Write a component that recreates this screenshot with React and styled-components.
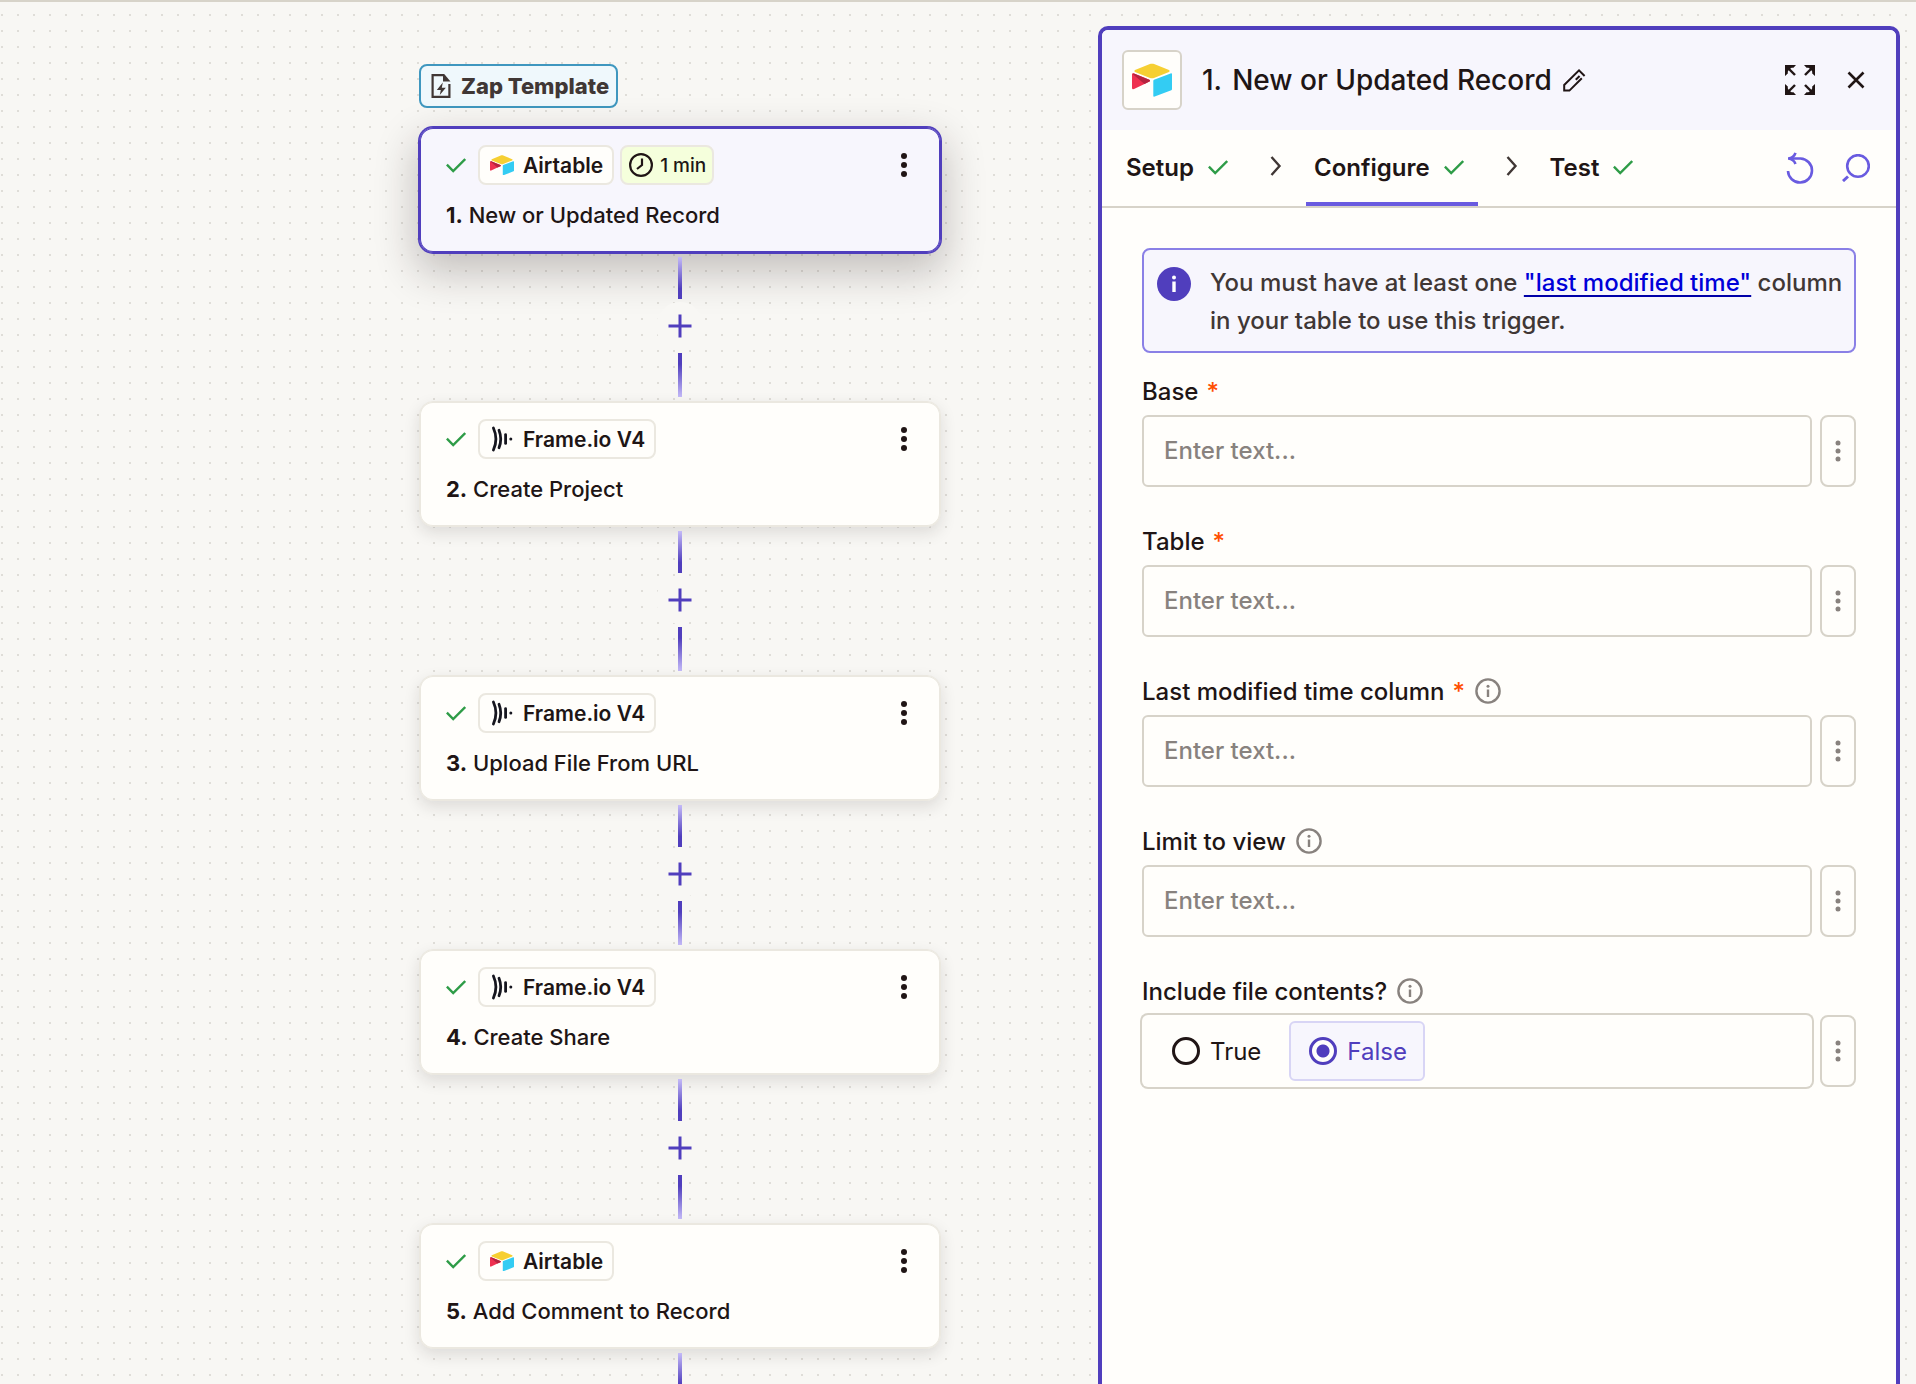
import React from "react";
import styled, { createGlobalStyle } from "styled-components";

const c = {
  ink: "#201515",
  text: "#403735",
  muted: "#88827e",
  line: "#d7d3c9",
  soft: "#ebe8e0",
  paper: "#fffefb",
  canvas: "#f8f7f4",
  lilac: "#f7f6fd",
  purple: "#503ebd",
  violet: "#695be0",
  green: "#2e9c47",
};

const GlobalStyle = createGlobalStyle`
  *, *::before, *::after { box-sizing: border-box; }
  body { margin: 0; background: ${c.canvas}; }
  body, button, input { font-family: Inter, "Liberation Sans", sans-serif; }
  button { background: none; border: 0; padding: 0; margin: 0; color: inherit; cursor: pointer; }
  svg { display: block; flex: none; }
`;

const Editor = styled.div`
  display: flex;
  height: 100vh;
  overflow: hidden;
  border-top: 2px solid ${c.line};
  color: ${c.ink};
  background: radial-gradient(circle at 2px 2px, #dfddd8 1px, transparent 1px) 0 11px / 16px 16px ${c.canvas};
`;

const Canvas = styled.main`
  flex: 1;
  min-width: 0;
  padding: 62px 0 0 262px;
  display: flex;
  justify-content: center;
`;

const Flow = styled.div`
  width: 522px;
  display: flex;
  flex-direction: column;
`;

const TemplateTag = styled.div`
  flex: none;
  align-self: flex-start;
  display: flex;
  align-items: center;
  gap: 10px;
  height: 44px;
  margin-bottom: 19px;
  padding: 0 7px 0 10px;
  border: 2px solid #3f97bf;
  border-radius: 8px;
  background: #eff8fc;
  color: ${c.text};
  font-size: 22px;
  font-weight: 800;
`;

const Card = styled.article`
  flex: none;
  padding: 17px 20px 23px 26px;
  border: 1px solid ${(p) => (p.$selected ? c.purple : c.soft)};
  border-radius: 14px;
  background: ${(p) => (p.$selected ? c.lilac : c.paper)};
  box-shadow: ${(p) =>
    p.$selected
      ? `inset 0 0 0 1px ${c.purple}, 0 0 0 1px ${c.purple}, 0 16px 40px 4px rgba(32, 21, 21, 0.24)`
      : `inset 0 0 0 1px ${c.soft}, 0 6px 16px rgba(32, 21, 21, 0.12)`};
`;

const CardTop = styled.div`
  display: flex;
  align-items: center;
  gap: 6px;
`;

const CheckSlot = styled.span`
  padding-right: 6px;
`;

const Pill = styled.span`
  display: flex;
  align-items: center;
  gap: ${(p) => (p.$time ? 7 : 9)}px;
  height: 40px;
  padding: 0 ${(p) => (p.$time ? 6 : 9)}px 0 ${(p) => (p.$time ? 7 : 10)}px;
  border: 2px solid ${c.soft};
  border-radius: 8px;
  background: ${(p) => (p.$time ? "#f5ffdc" : c.paper)};
  font-size: ${(p) => (p.$time ? 19 : 21)}px;
  font-weight: ${(p) => (p.$time ? 500 : 600)};
`;

const CardMenu = styled.button`
  display: grid;
  place-items: center;
  width: 32px;
  height: 40px;
  margin-left: auto;
`;

const CardTitle = styled.h2`
  margin: 16px 0 0;
  font-size: 22px;
  line-height: 28px;
  font-weight: 500;
`;

const Connector = styled.div`
  flex: none;
  display: flex;
  flex-direction: column;
  align-items: center;
  gap: 3px;
  padding: 4px 0;
`;

const Stem = styled.span`
  width: 4px;
  height: ${(p) => (p.$down ? 44 : 42)}px;
  background: linear-gradient(${(p) => (p.$down ? "to top" : "to bottom")}, #c4baf8, ${c.purple} 75%);
`;

const AddStep = styled.button`
  display: grid;
  place-items: center;
  width: 48px;
  height: 48px;
  border-radius: 50%;
  background: ${c.canvas};
  color: ${c.purple};
`;

const Panel = styled.aside`
  flex: none;
  width: 802px;
  margin: 24px 16px 0 0;
  border: 4px solid ${c.purple};
  border-bottom: 0;
  border-radius: 10px 10px 0 0;
  background: ${c.paper};
  overflow: hidden;
`;

const PanelHeader = styled.header`
  display: flex;
  align-items: center;
  gap: 20px;
  height: 100px;
  padding: 0 20px;
  background: ${c.lilac};
`;

const AppBadge = styled.span`
  display: grid;
  place-items: center;
  width: 60px;
  height: 60px;
  border: 2px solid ${c.line};
  border-radius: 6px;
  background: ${c.paper};
`;

const PanelTitle = styled.h1`
  display: flex;
  align-items: center;
  gap: 10px;
  margin: 0;
  font-size: 28px;
  line-height: 36px;
  font-weight: 500;
`;

const Actions = styled.div`
  display: flex;
  align-items: center;
  gap: 16px;
  margin-left: auto;
`;

const IconButton = styled.button`
  display: grid;
  place-items: center;
  width: 40px;
  height: 40px;
`;

const TabBar = styled.nav`
  display: flex;
  align-items: center;
  height: 78px;
  padding: 0 20px 0 16px;
  border-bottom: 2px solid ${c.line};
`;

const Tab = styled.button`
  display: flex;
  align-items: center;
  gap: 14px;
  align-self: stretch;
  padding: 2px 14px 0 8px;
  border-bottom: 4px solid ${(p) => (p.$active ? c.violet : "transparent")};
  font-size: 24px;
  font-weight: 600;
`;

const Crumb = styled.span`
  width: 64px;
  padding: 0 0 4px 4px;
  display: grid;
  place-items: center;
  color: ${c.text};
`;

const TabActions = styled(Actions)`
  color: ${c.violet};
`;

const Form = styled.form`
  padding: 40px;
`;

const Notice = styled.div`
  display: flex;
  gap: 19px;
  padding: 14px 8px 11px 12px;
  border: 2px solid #8a80e6;
  border-radius: 8px;
  background: ${c.lilac};
  color: ${c.text};
  font-size: 24px;
  line-height: 38px;
  font-weight: 500;
  margin-bottom: 20px;
`;

const NoticeText = styled.p`
  margin: 0;
`;

const NoticeLink = styled.a`
  color: #0000d8;
  text-decoration: underline #0000a8 2px;
  text-underline-offset: 4px;
`;

const Field = styled.div`
  display: flex;
  flex-direction: column;
  gap: 6px;
  margin-bottom: 36px;
`;

const LabelRow = styled.div`
  display: flex;
  align-items: center;
  gap: 10px;
  height: 36px;
  font-size: 24px;
  font-weight: 500;
  color: ${c.ink};
`;

const Star = styled.span`
  margin-left: 8px;
  color: #ff4f00;
`;

const HintButton = styled.button`
  color: ${c.muted};
`;

const Controls = styled.div`
  display: flex;
  gap: 8px;
`;

const TextInput = styled.input`
  flex: 1;
  min-width: 0;
  height: 72px;
  padding: 0 20px 2px;
  border: 2px solid ${c.line};
  border-radius: 6px;
  background: ${c.paper};
  color: ${c.ink};
  font-size: 24px;
  font-weight: 500;
  outline: none;
  &::placeholder { color: ${c.muted}; opacity: 1; }
`;

const FieldMenu = styled.button`
  display: grid;
  place-items: center;
  width: 36px;
  height: 72px;
  border: 2px solid ${c.line};
  border-radius: 8px;
  color: ${c.muted};
`;

const RadioGroup = styled.div`
  flex: 1;
  display: flex;
  align-items: center;
  gap: 10px;
  height: 72px;
  padding: 0 10px;
  border-radius: 6px;
  box-shadow: 0 0 0 2px ${c.line};
`;

const RadioOption = styled.label`
  display: flex;
  align-items: center;
  gap: 10px;
  height: 60px;
  padding: 0 16px 0 18px;
  border: 2px solid ${(p) => (p.$on ? "#d8d5f5" : "transparent")};
  border-radius: 6px;
  background: ${(p) => (p.$on ? c.lilac : "transparent")};
  color: ${(p) => (p.$on ? c.purple : c.ink)};
  font-size: 24px;
`;

const Radio = styled.input`
  appearance: none;
  width: 28px;
  height: 28px;
  margin: 0;
  border: 3px solid currentColor;
  border-radius: 50%;
  background: ${c.paper};
  color: inherit;
  &:checked { background: radial-gradient(circle, currentColor 6px, ${c.paper} 7px); }
`;

const Check = () => (
  <svg width="20" height="20" viewBox="0 0 20 20" fill="none" stroke={c.green} strokeWidth="2.4">
    <path d="M.9 9.6 7.2 16 19.2 4" />
  </svg>
);

const AirtableLogo = ({ width = 24 }) => (
  <svg width={width} height={(width * 34) / 40} viewBox="0 0 40 34">
    <path fill="#f6cf32" d="M17.9 1 3 7.1c-.8.4-.8 1.5 0 1.900l15 5.900c1.300.5 2.700.5 4 0l15-5.900c.8-.4.8-1.500 0-1.900L22.100 1c-1.300-.5-2.900-.5-4.200 0z" />
    <path fill="#33ccf3" d="M21.300 17.800v14.900c0 .7.700 1.200 1.400.9l16.600-6.400c.4-.2.700-.5.700-.9V11.300c0-.7-.7-1.200-1.400-.9L22 16.800c-.4.200-.7.600-.7 1z" />
    <path fill="#ee3050" d="M17.400 18.600 12.500 21 2 26c-.9.400-2-.2-2-1.100V11.500c0-1 1-1.400 2-1l15.300 6.200c1 .4 1 1.500.1 1.900z" />
    <path fill="#b5233f" d="m17.400 18.600-4.900 2.400L.6 10.900c.4-.4.900-.6 1.400-.4l15.300 6.200c1 .4 1 1.500.1 1.900z" />
  </svg>
);

const FrameLogo = () => (
  <svg width="24" height="26" viewBox="0 0 24 26" fill="none" stroke="#16161f" strokeLinecap="round">
    <path strokeWidth="2.800" d="M3.400 2c3.200 7 3.200 15 0 22" />
    <path strokeWidth="2.800" d="M9 4.200c2.200 5.600 2.200 12 0 17.600" />
    <path strokeWidth="2.800" d="M15.600 8.600v8.800" />
    <circle cx="20.800" cy="13" r="1.500" fill="#16161f" stroke="none" />
  </svg>
);

const Clock = () => (
  <svg width="24" height="24" viewBox="0 0 24 24" fill="none" stroke={c.ink} strokeWidth="2.200">
    <circle cx="12" cy="12" r="10.900" />
    <path d="M13 5.500v6.500l-5 4" />
  </svg>
);

const Dots = ({ r = 3, step = 9 }) => (
  <svg width="8" height="28" viewBox="0 0 8 28" fill="currentColor">
    <circle cx="4" cy={14 - step} r={r} />
    <circle cx="4" cy="14" r={r} />
    <circle cx="4" cy={14 + step} r={r} />
  </svg>
);

const TemplateIcon = () => (
  <svg width="20" height="26" viewBox="0 0 20 26">
    <path fill="none" stroke={c.text} strokeWidth="2.200" d="M12.500 2.100H1.600v21.800h16.800V11" />
    <path fill={c.text} d="M12 1h1.200L19.500 8.500H12z" />
    <path fill={c.text} d="M11.800 9.500 5.800 17h4l-1 5 6-7.300h-4z" />
  </svg>
);

const Plus = () => (
  <svg width="24" height="24" viewBox="0 0 24 24" fill="none" stroke="currentColor" strokeWidth="3">
    <path d="M12 .5v23M.5 12h23" />
  </svg>
);

const Pencil = () => (
  <svg width="24" height="24" viewBox="0 0 24 24" fill="none" stroke={c.ink} strokeWidth="2">
    <path d="M22.600 8 17 2.400 2.200 17v5.600h5.200L19.800 10.200" />
    <path d="M13.800 11.800 17.600 8" />
  </svg>
);

const Expand = () => (
  <svg width="30" height="30" viewBox="0 0 30 30">
    {[0, 90, 180, 270].map((a) => (
      <g key={a} transform={`rotate(${a} 15 15)`}>
        <path fill={c.ink} d="M0 0h11L8.500 2.800H2.800v5.700L0 11z" />
        <path fill={c.ink} d="M1 1h7L1 8z" />
        <path stroke={c.ink} strokeWidth="2.400" d="m2 2 8 8" />
      </g>
    ))}
  </svg>
);

const Close = () => (
  <svg width="18" height="18" viewBox="0 0 18 18" fill="none" stroke={c.ink} strokeWidth="2.600">
    <path d="m1.500 1.500 15 15m0-15-15 15" />
  </svg>
);

const Chevron = () => (
  <svg width="12" height="20" viewBox="0 0 12 20" fill="none" stroke="currentColor" strokeWidth="2.400">
    <path d="m1.500 1 8 9-8 9" />
  </svg>
);

const Undo = () => (
  <svg width="28" height="32" viewBox="0 0 28 32" fill="none" stroke="currentColor" strokeWidth="2.600">
    <path d="M3 6.500h11.500a12 12 0 1 1-12.500 12.500" />
    <path d="M9.500.8C8.500 4 6 6 2.200 6.500 6 7 8.500 9 9.500 12" />
  </svg>
);

const Search = () => (
  <svg width="28" height="28" viewBox="0 0 28 28" fill="none" stroke="currentColor" strokeWidth="2.600">
    <circle cx="16" cy="12" r="10.800" />
    <path strokeWidth="3" d="m1 27 5-4.500" />
  </svg>
);

const Info = () => (
  <svg width="26" height="26" viewBox="0 0 26 26" fill="none" stroke="currentColor" strokeWidth="2.400">
    <circle cx="13" cy="13" r="11.600" />
    <path d="M13 11.500v7.500" />
    <circle cx="13" cy="8.200" r="1.500" fill="currentColor" stroke="none" />
  </svg>
);

const InfoSolid = () => (
  <svg width="35" height="38" viewBox="0 0 35 38">
    <circle cx="18" cy="20" r="17" fill={c.purple} />
    <circle cx="18" cy="13.500" r="2" fill="#fff" />
    <path stroke="#fff" strokeWidth="3.400" d="M18 17.500V28" />
  </svg>
);

const steps = [
  { app: "Airtable", title: "New or Updated Record", selected: true, time: "1 min" },
  { app: "Frame.io V4", title: "Create Project" },
  { app: "Frame.io V4", title: "Upload File From URL" },
  { app: "Frame.io V4", title: "Create Share" },
  { app: "Airtable", title: "Add Comment to Record" },
];

const fields = [
  { id: "base", label: "Base", required: true },
  { id: "table", label: "Table", required: true },
  { id: "modified", label: "Last modified time column", required: true, hint: true },
  { id: "view", label: "Limit to view", hint: true },
];

function Step({ index, step }) {
  return (
    <>
      <Card $selected={step.selected}>
        <CardTop>
          <CheckSlot><Check /></CheckSlot>
          <Pill>
            {step.app === "Airtable" ? <AirtableLogo /> : <FrameLogo />}
            {step.app}
          </Pill>
          {step.time && <Pill $time><Clock />{step.time}</Pill>}
          <CardMenu type="button" aria-label="Step options"><Dots /></CardMenu>
        </CardTop>
        <CardTitle><b>{index}.</b> {step.title}</CardTitle>
      </Card>
      <Connector>
        <Stem />
        <AddStep type="button" aria-label="Add step"><Plus /></AddStep>
        <Stem $down />
      </Connector>
    </>
  );
}

function Hint() {
  return <HintButton type="button" aria-label="More information"><Info /></HintButton>;
}

function OptionsButton() {
  return (
    <FieldMenu type="button" aria-label="Field options"><Dots r={2.5} step={8} /></FieldMenu>
  );
}

export default function App() {
  const [include, setInclude] = React.useState("False");
  return (
    <Editor>
      <GlobalStyle />
      <Canvas>
        <Flow>
          <TemplateTag><TemplateIcon />Zap Template</TemplateTag>
          {steps.map((step, i) => <Step key={i} index={i + 1} step={step} />)}
        </Flow>
      </Canvas>
      <Panel>
        <PanelHeader>
          <AppBadge><AirtableLogo width={40} /></AppBadge>
          <PanelTitle>
            <span>1.</span>
            <span>New or Updated Record</span>
            <button type="button" aria-label="Rename"><Pencil /></button>
          </PanelTitle>
          <Actions>
            <IconButton type="button" aria-label="Expand"><Expand /></IconButton>
            <IconButton type="button" aria-label="Close"><Close /></IconButton>
          </Actions>
        </PanelHeader>
        <TabBar>
          <Tab type="button">Setup<Check /></Tab>
          <Crumb><Chevron /></Crumb>
          <Tab type="button" $active>Configure<Check /></Tab>
          <Crumb><Chevron /></Crumb>
          <Tab type="button">Test<Check /></Tab>
          <TabActions>
            <IconButton type="button" aria-label="Reset"><Undo /></IconButton>
            <IconButton type="button" aria-label="Search"><Search /></IconButton>
          </TabActions>
        </TabBar>
        <Form>
          <Notice>
            <InfoSolid />
            <NoticeText>
              You must have at least one <NoticeLink href="#modified">"last modified time"</NoticeLink> column in your table to use this trigger.
            </NoticeText>
          </Notice>
          {fields.map((f) => (
            <Field key={f.id}>
              <LabelRow>
                <label htmlFor={f.id}>
                  {f.label}
                  {f.required && <Star>*</Star>}
                </label>
                {f.hint && <Hint />}
              </LabelRow>
              <Controls>
                <TextInput id={f.id} type="text" placeholder="Enter text..." />
                <OptionsButton />
              </Controls>
            </Field>
          ))}
          <Field>
            <LabelRow>
              <span id="include-label">Include file contents?</span>
              <Hint />
            </LabelRow>
            <Controls>
              <RadioGroup role="radiogroup" aria-labelledby="include-label">
                {["True", "False"].map((v) => (
                  <RadioOption key={v} $on={include === v}>
                    <Radio type="radio" name="include" value={v} checked={include === v} onChange={() => setInclude(v)} />
                    {v}
                  </RadioOption>
                ))}
              </RadioGroup>
              <OptionsButton />
            </Controls>
          </Field>
        </Form>
      </Panel>
    </Editor>
  );
}
